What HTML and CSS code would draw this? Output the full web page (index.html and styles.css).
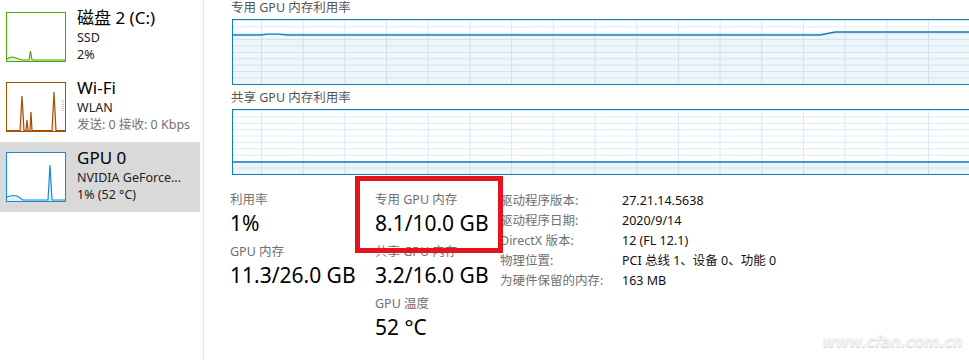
FILE: index.html
```html
<!DOCTYPE html>
<html lang="zh-CN">
<head>
  <meta charset="UTF-8" />
  <title>任务管理器 - GPU 0</title>
  <link rel="stylesheet" href="styles.css">
</head>
<body>
  <div class="app">
    <!-- left list of devices -->
    <aside class="sidebar">
      <div class="item">
        <svg class="thumb disk" viewBox="0 0 58 48" preserveAspectRatio="none">
          <path class="fill" d="M0,48 L0,46 3,44.5 6,44 9,45 12,46 15,47 22,47 23.5,38 25,47 58,47 58,48Z"/>
          <polyline points="0,46 3,44.5 6,44 9,45 12,46 15,47 22,47 23.5,38 25,47 58,47"/>
        </svg>
        <div class="info">
          <div class="title">磁盘 2 (C:)</div>
          <div class="sub">SSD</div>
          <div class="sub">2%</div>
        </div>
      </div>

      <div class="item">
        <svg class="thumb wifi" viewBox="0 0 58 48" preserveAspectRatio="none">
          <path class="fill" d="M0,48 L0,47.5 13,47.5 15,13 17,47.5 19,47.5 20,37 21,47.5 23,47.5 24,29 25,47.5 45,47.5 47,9 49,47.5 58,47.5 58,48Z"/>
          <polyline points="0,47.5 13,47.5 15,13 17,47.5 19,47.5 20,37 21,47.5 23,47.5 24,29 25,47.5 45,47.5 47,9 49,47.5 58,47.5"/>
          <line class="dots" x1="56" y1="17" x2="56" y2="29"/>
        </svg>
        <div class="info">
          <div class="title">Wi-Fi</div>
          <div class="sub">WLAN</div>
          <div class="sub muted">发送: 0 接收: 0 Kbps</div>
        </div>
      </div>

      <div class="item selected">
        <svg class="thumb gpu" viewBox="0 0 58 48" preserveAspectRatio="none">
          <path class="fill" d="M0,48 L0,44 3,43 7,42.5 10,43 13,45 16,47 41,47 43,12 45,47 58,47 58,48Z"/>
          <polyline points="0,44 3,43 7,42.5 10,43 13,45 16,47 41,47 43,12 45,47 58,47"/>
        </svg>
        <div class="info">
          <div class="title">GPU 0</div>
          <div class="sub">NVIDIA GeForce...</div>
          <div class="sub">1% (52 °C)</div>
        </div>
      </div>
    </aside>

    <!-- detail pane -->
    <main class="detail">
      <div class="chart-label">专用 GPU 内存利用率</div>
      <div class="chart">
        <svg viewBox="0 0 736 64" preserveAspectRatio="none">
          <path class="area" d="M0,15 L27,15 35,14.2 45,14.2 55,15 587,15 602,12 736,12 736,64 0,64Z"/>
          <polyline points="0,15 27,15 35,14.2 45,14.2 55,15 587,15 602,12 736,12"/>
        </svg>
      </div>

      <div class="chart-label second">共享 GPU 内存利用率</div>
      <div class="chart">
        <svg viewBox="0 0 736 64" preserveAspectRatio="none">
          <path class="area" d="M0,52 L736,52 736,64 0,64Z"/>
          <polyline points="0,52 736,52"/>
        </svg>
      </div>

      <section class="stats">
        <div class="col">
          <div class="stat">
            <div class="label">利用率</div>
            <div class="value">1%</div>
          </div>
          <div class="stat">
            <div class="label">GPU 内存</div>
            <div class="value">11.3/26.0 GB</div>
          </div>
        </div>

        <div class="col">
          <div class="stat">
            <div class="label">专用 GPU 内存</div>
            <div class="value">8.1/10.0 GB</div>
          </div>
          <div class="stat">
            <div class="label">共享 GPU 内存</div>
            <div class="value">3.2/16.0 GB</div>
          </div>
          <div class="stat">
            <div class="label">GPU 温度</div>
            <div class="value">52 °C</div>
          </div>
        </div>

        <dl class="props">
          <dt>驱动程序版本:</dt><dd>27.21.14.5638</dd>
          <dt>驱动程序日期:</dt><dd>2020/9/14</dd>
          <dt>DirectX 版本:</dt><dd>12 (FL 12.1)</dd>
          <dt>物理位置:</dt><dd>PCI 总线 1、设备 0、功能 0</dd>
          <dt>为硬件保留的内存:</dt><dd>163 MB</dd>
        </dl>

        <!-- red highlight drawn over the screenshot -->
        <div class="highlight"></div>
      </section>
    </main>
  </div>

  <div class="watermark">www.cfan.com.cn</div>
</body>
</html>
```

FILE: styles.css
```css
:root {
  --text: #000;
  --muted: #707070;
  --gpu-blue: #117dbb;
  --grid: #d9e8f4;
  --divider: #e6e6e6;
}

html, body {
  margin: 0;
  height: 100%;
  overflow: hidden;
  background: #fff;
}

body {
  font-family: "Noto Sans", "Noto Sans CJK SC", sans-serif;
  color: var(--text);
  position: relative;
}

.app {
  display: flex;
  height: 100%;
}

/* Sidebar */
.sidebar {
  width: 203px;
  flex: none;
  border-right: 1px solid var(--divider);
  padding-top: 2px;
}

.item {
  display: flex;
  align-items: flex-start;
  gap: 11px;
  height: 70px;
  box-sizing: border-box;
  padding: 10px 0 0 6px;
  margin-right: 3px;
}

.item.selected {
  background: #d9d9d9;
}

.thumb {
  width: 58px;
  height: 48px;
  flex: none;
  background: #fff;
  border: 1px solid;
}

.thumb polyline {
  fill: none;
  stroke-width: 1.2;
  vector-effect: non-scaling-stroke;
}

.thumb.disk { border-color: #4da60c; }
.thumb.disk polyline { stroke: #4da60c; }
.thumb.disk .fill { fill: rgba(77, 166, 12, 0.15); }

.thumb.wifi { border-color: #a74f01; }
.thumb.wifi polyline { stroke: #a74f01; }
.thumb.wifi .fill { fill: rgba(167, 79, 1, 0.12); }
.thumb.wifi .dots {
  stroke: #c9895a;
  stroke-width: 1;
  stroke-dasharray: 1 1;
}

.thumb.gpu { border-color: #1a8ad0; }
.thumb.gpu polyline { stroke: #1a8ad0; }
.thumb.gpu .fill { fill: rgba(26, 138, 208, 0.12); }

.info {
  margin-top: -5px;
  white-space: nowrap;
}

.title {
  font-size: 17px;
  line-height: 22px;
}

.sub {
  font-size: 12.5px;
  line-height: 17px;
  color: #222;
}

.sub.muted {
  color: var(--muted);
}

/* Detail pane */
.detail {
  flex: 1;
  padding-left: 28px;
  min-width: 0;
  overflow: hidden;
}

.chart-label {
  font-size: 12.5px;
  line-height: 16px;
  color: #555;
  margin-bottom: 3px;
  margin-left: -1px;
}

.chart-label.second {
  margin-top: 5px;
}

.chart {
  height: 66px;
  box-sizing: border-box;
  border: 1px solid var(--gpu-blue);
  border-right: none;
  background:
    linear-gradient(to right, var(--grid) 0 1px, transparent 1px) 28px 0 / 41.7px 100%,
    linear-gradient(to bottom, var(--grid) 0 1px, transparent 1px) 0 0 / 100% 6.4px;
}

.chart svg {
  display: block;
  width: 100%;
  height: 100%;
}

.chart polyline {
  fill: none;
  stroke: var(--gpu-blue);
  stroke-width: 1.3;
  vector-effect: non-scaling-stroke;
}

.chart .area {
  fill: rgba(17, 125, 187, 0.07);
}

/* Stats */
.stats {
  position: relative;
  display: flex;
  margin: 16px 0 0 -2px;
}

.col {
  width: 145px;
  flex: none;
}

.col + .col {
  width: 125px;
}

.stat {
  margin-bottom: 6px;
}

.label {
  font-size: 12.5px;
  line-height: 18px;
  color: var(--muted);
}

.value {
  font-size: 21px;
  line-height: 28px;
}

.props {
  display: grid;
  grid-template-columns: 122px auto;
  grid-auto-rows: 20px;
  margin: 0;
  font-size: 12.5px;
  line-height: 20px;
  align-content: start;
  white-space: nowrap;
}

.props dt {
  color: var(--muted);
}

.props dd {
  margin: 0;
  color: #111;
}

.highlight {
  position: absolute;
  left: 125px;
  top: -15px;
  width: 148px;
  height: 77px;
  box-sizing: border-box;
  border: 5px solid #e5141e;
}

.watermark {
  position: absolute;
  right: 6px;
  bottom: 9px;
  font: italic bold 15px "DejaVu Sans", sans-serif;
  letter-spacing: -0.5px;
  color: #f2f2f2;
  text-shadow: 0 1px 1px #cfcfcf;
}
```
